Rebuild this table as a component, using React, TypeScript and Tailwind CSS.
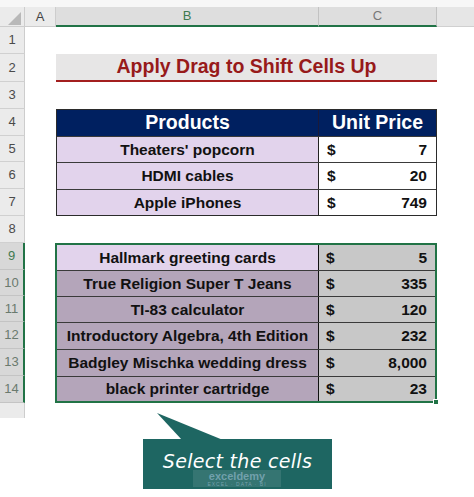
import React from "react";

const rowHeights = [
  "h-[27px]",
  "h-[28px]",
  "h-[27px]",
  "h-[27px]",
  "h-[26px]",
  "h-[27px]",
  "h-[27px]",
  "h-[27px]",
  "h-[27px]",
  "h-[26px]",
  "h-[26px]",
  "h-[27px]",
  "h-[27px]",
  "h-[27px]",
];

const items1 = [
  { name: "Theaters' popcorn", price: "7" },
  { name: "HDMI cables", price: "20" },
  { name: "Apple iPhones", price: "749" },
];

const items2 = [
  { name: "Hallmark greeting cards", price: "5" },
  { name: "True Religion Super T Jeans", price: "335" },
  { name: "TI-83 calculator", price: "120" },
  { name: "Introductory Algebra, 4th Edition", price: "232" },
  { name: "Badgley Mischka wedding dress", price: "8,000" },
  { name: "black printer cartridge", price: "23" },
];

const rows2Heights = [
  "h-[25px]",
  "h-[26px] border-t border-[#3a3a3a]",
  "h-[26px] border-t border-[#3a3a3a]",
  "h-[27px] border-t border-[#3a3a3a]",
  "h-[27px] border-t border-[#3a3a3a]",
  "flex-1 border-t border-[#3a3a3a]",
];

function RowHeader({ n, h }: { n: number; h: string }) {
  const sel = n >= 9;
  return (
    <div
      className={`${h} flex items-center justify-center border-b text-[13px] ${
        sel
          ? "bg-[#d8d8d8] border-b-[#c4c4c4] border-r-2 border-r-[#217346]"
          : "bg-[#ebebeb] border-b-[#d0d0d0] border-r border-r-[#cdcdcd]"
      } ${n === 9 ? "text-[#3f7a50]" : sel ? "text-[#6a7a6e]" : "text-[#4a4a4a]"}`}
    >
      {n}
    </div>
  );
}

export default function App() {
  return (
    <div className="w-[474px] h-[497px] bg-white overflow-hidden font-['Liberation_Sans',Arial,sans-serif]">
      <div className="h-[7px] bg-[#f7f7f7]" />
      <div className="flex">
        {/* Row header column */}
        <div className="w-[25px] flex flex-col">
          <div className="h-[20px] bg-[#ebebeb] border-r border-b border-[#cdcdcd] relative">
            <svg className="absolute left-[8px] top-[5px]" width="13" height="13" viewBox="0 0 13 13">
              <polygon points="13,0 13,13 0,13" fill="#b8b8b8" />
            </svg>
          </div>
          {rowHeights.map((h, i) => (
            <RowHeader key={i} n={i + 1} h={h} />
          ))}
          <div className="h-[15px] bg-[#ebebeb] border-r border-[#cdcdcd]" />
        </div>

        {/* Column A */}
        <div className="w-[31px] flex flex-col">
          <div className="h-[20px] bg-[#ebebeb] border-r border-b border-[#cdcdcd] flex items-center justify-center text-[13px] text-[#444]">
            A
          </div>
        </div>

        {/* Columns B:C */}
        <div className="w-[381px] flex flex-col">
          <div className="h-[20px] flex">
            <div className="w-[263px] bg-[#dedede] border-b-2 border-b-[#217346] border-r border-r-[#c2c2c2] flex items-center justify-center text-[13px] text-[#3f7a50]">
              B
            </div>
            <div className="w-[118px] bg-[#dedede] border-b-2 border-b-[#217346] border-r border-r-[#c2c2c2] flex items-center justify-center text-[13px] text-[#777]">
              C
            </div>
          </div>

          <div className="h-[27px]" />
          <div className="h-[28px] bg-[#e7e6e6] border-b-2 border-[#a31f1f] flex items-center justify-center text-[19.5px] font-bold text-[#971a1a]">
            Apply Drag to Shift Cells Up
          </div>
          <div className="h-[27px]" />

          {/* Table 1 */}
          <div className="h-[107px] border border-[#2b2b2b] flex flex-col">
            <div className="h-[26px] flex bg-[#002060] text-white text-[19.5px] font-bold">
              <div className="w-[262px] border-r border-[#1a1a3a] flex items-center justify-center">Products</div>
              <div className="flex-1 flex items-center justify-center">Unit Price</div>
            </div>
            {items1.map((it, i) => (
              <div
                key={i}
                className={`${i === 0 ? "h-[26px]" : i === 1 ? "h-[27px]" : "flex-1"} flex border-t border-[#3a3a3a] text-[15.5px] font-bold text-[#111]`}
              >
                <div className="w-[262px] bg-[#e2d3ec] border-r border-[#222] flex items-center justify-center">{it.name}</div>
                <div className="flex-1 bg-white flex items-center justify-between pl-[8px] pr-[9px]">
                  <span>$</span>
                  <span>{it.price}</span>
                </div>
              </div>
            ))}
          </div>

          <div className="h-[27px]" />

          {/* Table 2 (selected) */}
          <div className="h-[160px] -ml-px border-2 border-[#217346] flex flex-col relative">
            {items2.map((it, i) => (
              <div key={i} className={`${rows2Heights[i]} flex text-[15.5px] font-bold text-[#111]`}>
                <div
                  className={`w-[262px] border-r border-[#111] flex items-center justify-center ${
                    i === 0 ? "bg-[#e2d3ec]" : "bg-[#b4a5ba]"
                  }`}
                >
                  {it.name}
                </div>
                <div className="flex-1 bg-[#c8c8c8] flex items-center justify-between pl-[7px] pr-[8px]">
                  <span>$</span>
                  <span>{it.price}</span>
                </div>
              </div>
            ))}
            <div className="absolute -bottom-[4px] -right-[4px] w-[6px] h-[6px] bg-[#217346] border border-white" />
          </div>

          {/* Callout */}
          <div className="relative mt-[36px] ml-[87px] w-[189px] h-[50px] bg-[#1e6662] flex items-start justify-center pt-[10px]">
            <svg className="absolute left-0 -top-[26px]" width="80" height="27" viewBox="0 0 80 27">
              <polygon points="14,0 39,27 80,27" fill="#1e6662" />
            </svg>
            <div className="absolute left-[50px] top-[31px] w-[88px] h-[17px] bg-white/10 flex flex-col items-center justify-center leading-none">
              <span className="text-[11px] font-bold text-[#9dbfd4]/60">exceldemy</span>
              <span className="text-[5px] tracking-[1px] text-[#9dbfd4]/60">EXCEL · DATA · BI</span>
            </div>
            <span className="relative leading-[24px] text-white text-[19px] italic font-['DejaVu_Sans',sans-serif] tracking-[0.3px]">
              Select the cells
            </span>
          </div>
        </div>

        {/* Rest */}
        <div className="flex-1 flex flex-col">
          <div className="h-[20px] bg-[#e6e6e6] border-b border-[#d0d0d0]" />
        </div>
      </div>
    </div>
  );
}
